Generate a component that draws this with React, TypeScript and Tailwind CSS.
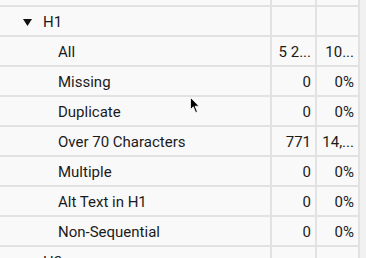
import React from "react";

type Row = {
  label: string;
  count?: string;
  pct?: string;
  level: 0 | 1;
  open?: boolean;
};

const rows: Row[] = [
  { label: "H1", level: 0, open: true },
  { label: "All", count: "5 2...", pct: "10...", level: 1 },
  { label: "Missing", count: "0", pct: "0%", level: 1 },
  { label: "Duplicate", count: "0", pct: "0%", level: 1 },
  { label: "Over 70 Characters", count: "771", pct: "14,...", level: 1 },
  { label: "Multiple", count: "0", pct: "0%", level: 1 },
  { label: "Alt Text in H1", count: "0", pct: "0%", level: 1 },
  { label: "Non-Sequential", count: "0", pct: "0%", level: 1 },
  { label: "H2", level: 0 },
];

function TreeRow({ row, className = "" }: { row: Row; className?: string }) {
  return (
    <div className={`flex h-[30px] border-b-2 border-[#e2e2e2] pt-[2px] ${className}`}>
      <div className="flex w-[270px] items-center">
        {row.level === 0 ? (
          <div className="flex items-center">
            <span className="ml-[23px] flex w-[20px]">
              {row.open && (
                <svg width="9" height="7" viewBox="0 0 9 7">
                  <polygon points="0,0 9,0 4.5,7" fill="#111" />
                </svg>
              )}
            </span>
            <span>{row.label}</span>
          </div>
        ) : (
          <span className="ml-[58px]">{row.label}</span>
        )}
      </div>
      <div className="-mt-[2px] w-[2px] bg-[#e2e2e2]" />
      <div className="flex w-[43px] items-center justify-end pr-[4px]">{row.count}</div>
      <div className="-mt-[2px] w-[2px] bg-[#e2e2e2]" />
      <div className="flex w-[41px] items-center justify-end pr-[4px]">{row.pct}</div>
      <div className="-mt-[2px] w-[2px] bg-[#e2e2e2]" />
    </div>
  );
}

export default function App() {
  return (
    <div
      className="relative h-[258px] w-[366px] overflow-hidden bg-[#f9f9f9] text-[15px] text-[#1b1b1b]"
      style={{ fontFamily: "Roboto, 'Liberation Sans', sans-serif" }}
    >
      <div className="flex">
        <div className="w-[360px]">
          <TreeRow row={{ label: "Multiple", level: 1 }} className="-mt-[23px]" />
          {rows.map((r) => (
            <TreeRow key={r.label} row={r} />
          ))}
        </div>
        <div className="flex-1 bg-[#f1f1f1]" />
      </div>

      {/* mouse pointer */}
      <svg
        className="absolute left-[190px] top-[97px]"
        width="10"
        height="17"
        viewBox="0 0 10 17"
      >
        <path
          d="M0.5 0.5 L0.5 12.5 L3.3 9.8 L5.6 15.5 L7.4 14.7 L5.1 9.2 L9 9.2 Z"
          fill="#000"
          stroke="#fff"
          strokeWidth="0.8"
        />
      </svg>
    </div>
  );
}
